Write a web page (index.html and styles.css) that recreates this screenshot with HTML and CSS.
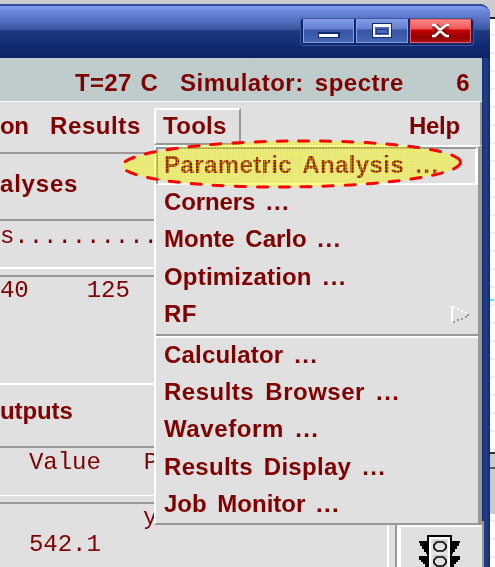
FILE: index.html
```html
<!DOCTYPE html>
<html lang="en">
<head>
<meta charset="utf-8">
<title>Simulation Environment</title>
<link rel="stylesheet" href="styles.css">
</head>
<body>
<div class="desktop">
  <div class="window">
    <header class="titlebar">
      <div class="controls">
        <button class="ctl" aria-label="Minimize"><svg width="51" height="24"><path d="M15 13h22v6H15z" fill="#122a72"/><path d="M16 15h19v3H16z" fill="#fff"/></svg></button>
        <button class="ctl" aria-label="Maximize"><svg width="52" height="24"><path d="M16 4h20v15H16z" fill="#122a72"/><path d="M18 7h16v10H18z" fill="#4868ba" stroke="#fff" stroke-width="2"/><path d="M17 6.500h18" stroke="#fff" stroke-width="3"/><path d="M20.500 10.500h11v4h-11z" fill="#4868ba" stroke="#1c3682"/></svg></button>
        <button class="ctl close" aria-label="Close"><svg width="61" height="24"><path d="M22 5h6l3 3 3-3h5v5l-3 2 3 3v4h-6l-3-3-3 3h-5v-5l3-2-3-3z" fill="#730000" opacity=".55"/><path d="M22 6h3l5 5 6-5h3M22 17h3l5-5 6 5h3" fill="none" stroke="#fff" stroke-width="2.700"/></svg></button>
      </div>
    </header>
    <div class="status">
      <span class="temp">T=27 C</span><span class="sim">Simulator: spectre</span><span class="count">6</span>
    </div>
    <div class="client">
      <nav class="menubar">
        <span class="m-on">on</span><span class="m-results">Results</span><span class="m-tools">Tools</span><span class="m-help">Help</span>
      </nav>
      <div class="panes">
        <section class="heading h-analyses">alyses</section>
        <section class="columns c-args">s..........</section>
        <section class="list l-args"><span>40</span><span>125</span></section>
        <section class="heading h-outputs">utputs</section>
        <section class="columns c-value"><span>Value</span><span>P</span></section>
        <section class="results"><span class="r1">y</span><span class="r2">542.1</span></section>
      </div>
      <aside class="toolbox">
        <svg width="44" height="32" viewBox="0 0 44 32">
          <path d="M1 6h9v13H8v-2H6v-3H4v-3H2V8H1zM1 21h9v11H7v-3H5v-2H3v-2H1zM42 6h-9v13h2v-2h2v-3h2v-3h2V8h1zM42 21h-9v11h3v-3h2v-2h2v-2h2z" fill="#000"/>
          <path d="M10 1h23v34H10z" fill="#e4e4e4" stroke="#000" stroke-width="2"/>
          <path d="M12 3h19v30H12z" fill="none" stroke="#fff" stroke-width="2"/>
          <path d="M15 5h14v11H15zM15 20h14v12H15z" fill="#c8c8c8"/>
          <path d="M19 7h6l3 3v3l-3 3h-6l-3-3v-3zM19 22h6l3 3v3l-3 3h-6l-3-3v-3z" fill="#e0e0e0" stroke="#000" stroke-width="1.700"/>
        </svg>
      </aside>
      <div class="popup">
        <div class="item active i-param">Parametric Analysis <i>...</i></div>
        <div class="item i-corners">Corners <i>...</i></div>
        <div class="item i-monte">Monte Carlo <i>...</i></div>
        <div class="item i-opt">Optimization <i>...</i></div>
        <div class="item i-rf">RF<svg class="arrow" width="18" height="18"><path d="M1 17V1h3" fill="none" stroke="#fff" stroke-width="2"/><path d="M6 3h2M10 5h2M14 7h2" stroke="#fff" stroke-width="2"/><path d="M2 16h2M6 14h2M10 13h2M14 11h2M16 9h2" stroke="#989898" stroke-width="2"/></svg></div>
        <div class="item i-calc after">Calculator <i>...</i></div>
        <div class="item i-browser">Results Browser <i>...</i></div>
        <div class="item i-wave">Waveform <i>...</i></div>
        <div class="item i-display">Results Display <i>...</i></div>
        <div class="item i-job">Job Monitor <i>...</i></div>
      </div>
    </div>
  </div>
  <div class="behind"></div>
  <svg class="marker" width="350" height="54" viewBox="0 0 350 54">
    <defs><pattern id="mesh" width="3" height="3" patternUnits="userSpaceOnUse"><rect width="3" height="3" fill="#ffff00" fill-opacity=".1"/><path d="M0 .5h3M.5 0v3" stroke="#ffff30" stroke-opacity=".36"/></pattern></defs>
    <ellipse class="wash" cx="174.500" cy="27" rx="169" ry="23" transform="rotate(-.6 174.500 27)"/>
    <ellipse cx="174.500" cy="27" rx="169" ry="23" fill="url(#mesh)" transform="rotate(-.6 174.500 27)"/>
    <ellipse cx="174.500" cy="27" rx="169" ry="23" fill="none" stroke="#f00" stroke-width="3" stroke-linecap="round" stroke-dasharray="10 12" transform="rotate(-.6 174.500 27)"/>
  </svg>
</div>
</body>
</html>
```
FILE: styles.css
```css
* { box-sizing: border-box; }
body { margin: 0; }
.desktop {
  position: relative;
  width: 495px;
  height: 567px;
  overflow: hidden;
  display: flex;
  background: #ccc;
  color: #800000;
  font: bold 24px/28px "Liberation Sans", sans-serif;
  letter-spacing: .3px;
  white-space: nowrap;
}
.window {
  width: 490px;
  height: 563px;
  margin-top: 4px;
  border-top-right-radius: 10px;
  background: linear-gradient(90deg, #12296e 482px, #203c86 484px, #203c86 487px, #12296e 490px);
  overflow: hidden;
  flex: none;
}
.titlebar {
  height: 54px;
  padding: 13px 17px 0 0;
  display: flex;
  justify-content: flex-end;
  align-items: flex-start;
  border-top: 2px solid #324e9c;
  border-top-right-radius: 10px;
  background: linear-gradient(#809cf0, #6885d8 6px, #4c69ba 17px, #385499 24px, #203b84 24px, #112b72 40px, #0c2265);
}
.controls {
  display: flex;
  gap: 2px;
  padding: 0 2px 2px;
  border-radius: 3px;
  background: #0e256c;
  box-shadow: 0 0 0 1px #3b569f;
}
.ctl {
  width: 51px;
  height: 24px;
  padding: 0;
  border: 0;
  background: linear-gradient(#839de6, #6380d0 10px, #3554a2 11px, #4867b3);
  box-shadow: inset 0 0 0 1px #86a0e8;
}
.ctl:nth-child(2) { width: 52px; }
.ctl svg { display: block; }
.ctl.close {
  width: 61px;
  background: linear-gradient(#ff8c8c, #ef5656 10px, #c60000 11px, #960000 18px, #a91818);
  box-shadow: inset 0 0 0 1px #ed6262;
}
.status {
  width: 482px;
  height: 43px;
  padding: 11px 12px 0 75px;
  display: flex;
  background: #bfcccc;
}
.temp { width: 105px; word-spacing: 2px; }
.sim { word-spacing: 4px; letter-spacing: .5px; }
.count { margin-left: auto; }
.client {
  position: relative;
  width: 482px;
  height: 466px;
  display: grid;
  grid-template: 44px 1fr / 397px 85px;
  background: #e0e0e0;
  border-top: 1px solid #fff;
}
.menubar {
  grid-column: 1 / 3;
  display: flex;
  padding-top: 6px;
  border-right: 2px solid #989898;
}
.menubar span { padding-top: 4px; height: 37px; }
.m-on { width: 50px; letter-spacing: -.5px; }
.m-results { width: 104px; letter-spacing: .6px; }
.m-tools {
  width: 87px;
  padding-left: 7px;
  border: 2px solid #989898;
  border-left-color: #fff;
  border-top-color: #fff;
}
.menubar .m-tools { padding-top: 2px; }
.m-help { margin-left: 168px; letter-spacing: -.3px; }
.panes {
  padding-top: 6px;
  display: flex;
  flex-direction: column;
  border-right: 2px solid #fff;
  width: 389px;
  height: 421px;
}
.heading { flex: none; border-top: 2px solid #989898; }
.h-analyses { height: 67px; padding-top: 16px; letter-spacing: .8px; }
.columns, .list, .results {
  flex: none;
  font: 24px/28px "Liberation Mono", monospace;
  letter-spacing: -.05px;
  border-top: 2px solid #989898;
}
.c-args { height: 50px; border-bottom: 2px solid #fff; padding-top: 2px; }
.list { height: 110px; margin-top: 6px; padding-top: 0; border-bottom: 2px solid #fff; display: flex; gap: 58px; }
.h-outputs { height: 61px; border: 0; padding-top: 12px; letter-spacing: -.1px; }
.c-value { height: 50px; border-bottom: 1px solid #fff; padding: 1px 0 0 29px; display: flex; gap: 43px; }
.results { flex: 1; margin-top: 6px; display: flex; flex-direction: column; }
.results span { height: 27px; }
.r1 { padding-left: 143px; }
.r2 { padding-left: 29px; }
.toolbox {
  margin-top: 377px;
  border: solid #fff;
  border-width: 4px 0 0 4px;
  outline: 2px solid #989898;
  padding: 8px 0 0 17px;
}
.toolbox svg { display: block; }
.popup {
  position: absolute;
  left: 154px;
  top: 43px;
  width: 328px;
  height: 380px;
  background: #e0e0e0;
  border: solid #989898;
  border-width: 2px 4px 2px 2px;
  border-left-color: #fff;
  border-top-color: #fff;
}
.item {
  height: 37.3px;
  padding: 3px 0 0 8px;
  word-spacing: 4px;
}
.item i { font-style: normal; letter-spacing: 1.4px; }
.item.active {
  height: 38px;
  padding: 2px 0 0 6px;
  border: 2px solid #989898;
  border-right: 3px solid #fff;
  border-bottom-color: #fff;
}
.i-rf { display: flex; justify-content: space-between; padding-right: 9px; }
.arrow { margin-top: 6px; }
.after { height: 41px; padding-top: 5px; border-top: 2px solid #989898; box-shadow: inset 0 2px #fff; }
.i-param { letter-spacing: .4px; }
.i-corners { letter-spacing: -.1px; }
.i-monte, .i-job { letter-spacing: 0; }
.i-opt, .i-calc { letter-spacing: .2px; }
.i-browser { letter-spacing: .5px; }
.i-wave { letter-spacing: .6px; }
.i-display { letter-spacing: .3px; }
.behind {
  width: 5px;
  height: 567px;
  background:
    linear-gradient(#40f0ff, #40f0ff) 0 299px / 4px 2px no-repeat,
    linear-gradient(#ccc 17px, #222 17px 19px, transparent 19px 452px, #333 452px 454px, #ccc 454px 467px, #555 467px 469px, #ccc 469px 514px, transparent 514px),
    repeating-linear-gradient(#fff 0 16px, #eee 16px 18px);
}
.marker {
  position: absolute;
  left: 117px;
  top: 137px;
}
.wash {
  fill: #ffffb4;
  mix-blend-mode: multiply;
}
```
